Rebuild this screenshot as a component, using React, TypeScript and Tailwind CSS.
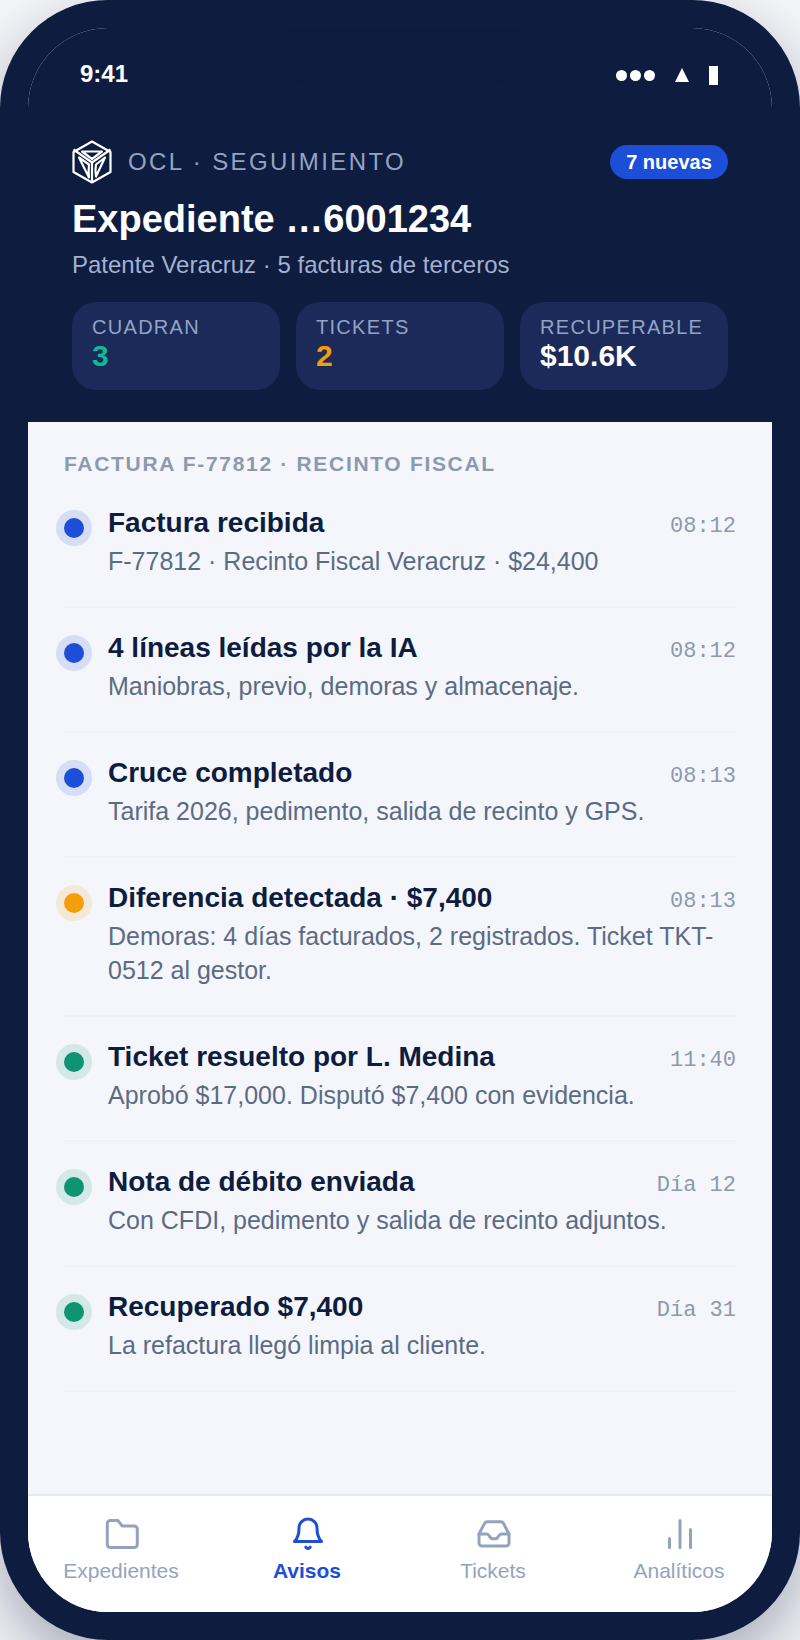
import { ChartNoAxesColumn } from "lucide-react"

const events = [
    { title: "Factura recibida", time: "08:12", desc: "F-77812 · Recinto Fiscal Veracruz · $24,400", tone: "blue" },
    { title: "4 líneas leídas por la IA", time: "08:12", desc: "Maniobras, previo, demoras y almacenaje.", tone: "blue" },
    { title: "Cruce completado", time: "08:13", desc: "Tarifa 2026, pedimento, salida de recinto y GPS.", tone: "blue" },
    { title: "Diferencia detectada · $7,400", time: "08:13", desc: "Demoras: 4 días facturados, 2 registrados. Ticket TKT-0512 al gestor.", tone: "amber" },
    { title: "Ticket resuelto por L. Medina", time: "11:40", desc: "Aprobó $17,000. Disputó $7,400 con evidencia.", tone: "green" },
    { title: "Nota de débito enviada", time: "Día 12", desc: "Con CFDI, pedimento y salida de recinto adjuntos.", tone: "green" },
    { title: "Recuperado $7,400", time: "Día 31", desc: "La refactura llegó limpia al cliente.", tone: "green" },
]

const dotTones: Record<string, string> = {
    blue: "bg-[#1d4ed8] shadow-[0_0_0_8px_rgba(29,78,216,0.14)]",
    amber: "bg-[#f59e0b] shadow-[0_0_0_8px_rgba(245,158,11,0.14)]",
    green: "bg-[#0e9373] shadow-[0_0_0_8px_rgba(14,147,115,0.14)]",
}

const stats = [
    { label: "CUADRAN", value: "3", color: "text-[#14b892]" },
    { label: "TICKETS", value: "2", color: "text-[#f59e0b]" },
    { label: "RECUPERABLE", value: "$10.6K", color: "text-white" },
]

const NavIcon = ({ children }: { children: React.ReactNode }) => (
    <svg width="36" height="36" viewBox="0 0 24 24" fill="none" stroke="currentColor" strokeWidth="2" strokeLinecap="round" strokeLinejoin="round" className="ml-[2px]">
        {children}
    </svg>
)

const FolderIcon = () => (
    <NavIcon>
        <path d="M2.2 5a2 2 0 0 1 2-2h5l3 3.7h8a2 2 0 0 1 2 2V19a2 2 0 0 1-2 2h-16a2 2 0 0 1-2-2Z" />
    </NavIcon>
)

const BellIcon = () => (
    <NavIcon>
        <path d="M6 8a6 6 0 0 1 12 0c0 5 1 7 3 9H3c2-2 3-4 3-9Z" />
        <path d="M10.5 20.8a1.8 1.8 0 0 0 3 0" />
    </NavIcon>
)

const InboxIcon = () => (
    <NavIcon>
        <path d="M7.5 3.8h9a2 2 0 0 1 1.8 1.1L22 12v6a2 2 0 0 1-2 2H4a2 2 0 0 1-2-2v-6l3.7-7.1a2 2 0 0 1 1.8-1.1Z" />
        <path d="M2 12h5c1 0 1.5.6 2 1.5.5 1 1.2 1.7 2.2 1.7h1.6c1 0 1.7-.7 2.2-1.7.5-.9 1-1.5 2-1.5h5" />
    </NavIcon>
)

const ChartIcon = () => <ChartNoAxesColumn size={36} strokeWidth={2} className="ml-[2px]" />

const tabs = [
    { label: "Expedientes", Icon: FolderIcon, active: false },
    { label: "Avisos", Icon: BellIcon, active: true },
    { label: "Tickets", Icon: InboxIcon, active: false },
    { label: "Analíticos", Icon: ChartIcon, active: false },
]

const Logo = () => (
    <svg width="40" height="44" viewBox="0 0 40 44" fill="none" stroke="white" strokeWidth="2.2" strokeLinejoin="round">
        <path d="M20 1.5 38.5 12v20L20 42.5 1.5 32V12Z" />
        <path d="M1.5 9.5 20 22.5 38.5 9.5" />
        <path d="M20 22.5v20" />
        <path d="M10 11.5h20L20 19Z" />
        <path d="M7 17.5l10 7c-.5 5-.5 9 0 13Z" />
        <path d="M33 17.5l-9 7c-1 5-.5 9 0 12Z" />
    </svg>
)

export default function App() {
    return (
        <div className="w-[800px] h-[1640px] bg-[#f4f5f8] font-['Liberation_Sans',Arial,sans-serif]">
            <div className="w-full h-full rounded-[108px] bg-[#0e1c3f] p-[28px] shadow-[0_24px_60px_rgba(14,28,63,0.35)]">
                <div className="w-full h-full rounded-[80px] overflow-hidden bg-[#f4f6fb] flex flex-col">
                    <header className="relative bg-[#0e1c3f] h-[394px] shrink-0 px-[44px] flex flex-col">
                        <div className="absolute top-0 left-[254px] w-[238px] h-[60px] rounded-b-[36px] bg-[#0d1b3d]" />
                        <div className="relative flex items-center justify-between h-[92px] pl-[8px] pr-[10px] text-white">
                            <span className="text-[24px] font-bold">9:41</span>
                            <div className="flex items-center gap-[20px] mt-[2px]">
                                <div className="flex gap-[3px]">
                                    <span className="w-[11px] h-[11px] rounded-full bg-white" />
                                    <span className="w-[11px] h-[11px] rounded-full bg-white" />
                                    <span className="w-[11px] h-[11px] rounded-full bg-white" />
                                </div>
                                <span className="w-0 h-0 border-l-[7.5px] border-r-[7.5px] border-b-[14px] border-l-transparent border-r-transparent border-b-white" />
                                <span className="w-[9px] h-[19px] bg-white" />
                            </div>
                        </div>
                        <div className="flex items-center justify-between mt-[20px]">
                            <div className="flex items-center gap-[16px]">
                                <Logo />
                                <span className="text-[24px] tracking-[2.4px] text-[#94a3c4]">OCL · SEGUIMIENTO</span>
                            </div>
                            <span className="h-[34px] w-[118px] justify-center rounded-full bg-[#1d4ed8] text-white text-[20px] font-bold flex items-center">7 nuevas</span>
                        </div>
                        <h1 className="text-[38px] leading-[48px] font-bold text-white mt-[11px]">Expediente …6001234</h1>
                        <p className="text-[24px] leading-[32px] text-[#a3b1d0] mt-[6px]">Patente Veracruz · 5 facturas de terceros</p>
                        <div className="grid grid-cols-3 gap-[16px] mt-[21px]">
                            {stats.map((s) => (
                                <div key={s.label} className="bg-[#1c2a5a] rounded-[24px] h-[88px] px-[20px] pt-[13px]">
                                    <div className="text-[20px] leading-[24px] tracking-[1.3px] text-[#94a3c4]">{s.label}</div>
                                    <div className={`text-[30px] leading-[34px] font-bold ${s.color}`}>{s.value}</div>
                                </div>
                            ))}
                        </div>
                    </header>
                    <main className="flex-1 px-[36px] pt-[28px]">
                        <div className="text-[21px] leading-[28px] font-bold tracking-[1.68px] text-[#8d99b0]">FACTURA F-77812 · RECINTO FISCAL</div>
                        <div className="mt-[5px]">
                            {events.map((e) => (
                                <div key={e.title} className="flex gap-[24px] pt-[21px] pb-[28px] border-b-2 border-[#f0f2f8]">
                                    <span className={`w-[20px] h-[20px] rounded-full mt-[14px] shrink-0 ${dotTones[e.tone]}`} />
                                    <div className="flex-1 min-w-0">
                                        <div className="flex items-baseline justify-between h-[38px]">
                                            <span className="text-[28px] leading-[38px] font-bold text-[#0e1c3f]">{e.title}</span>
                                            <span className="font-['Liberation_Mono',monospace] text-[22px] leading-[24px] text-[#8d99b0]">{e.time}</span>
                                        </div>
                                        <p className="text-[25px] leading-[34px] text-[#5c6b85] mt-[2px]">{e.desc}</p>
                                    </div>
                                </div>
                            ))}
                        </div>
                    </main>
                    <nav className="h-[118px] shrink-0 bg-white border-t-2 border-[#e6e9f2] grid grid-cols-4 pt-[20px]">
                        {tabs.map(({ label, Icon, active }) => (
                            <div key={label} className={`flex flex-col items-center ${active ? "text-[#1d4ed8]" : "text-[#94a3bd]"}`}>
                                <Icon />
                                <span className={`text-[21px] leading-[26px] mt-[6px] ${active ? "font-bold" : ""}`}>{label}</span>
                            </div>
                        ))}
                    </nav>
                </div>
            </div>
        </div>
    )
}
